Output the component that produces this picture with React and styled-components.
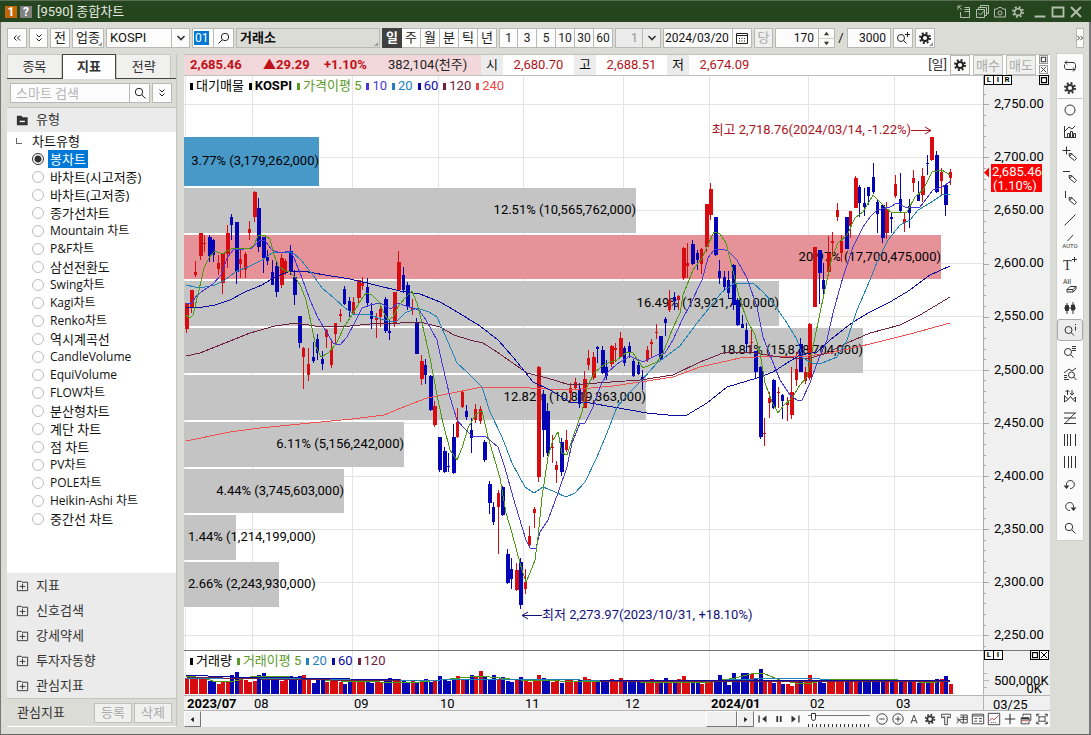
import React, { useState } from 'react'
import styled, { createGlobalStyle, css } from 'styled-components'

const UI_FONT = `Roboto, "Noto Sans CJK KR", sans-serif`
const LIST_FONT = `"Open Sans", "Noto Sans CJK KR", sans-serif`

const chartTypes = [
    '봉차트', '바차트(시고저종)', '바차트(고저종)', '종가선차트', 'Mountain 차트', 'P&F차트', '삼선전환도',
    'Swing차트', 'Kagi차트', 'Renko차트', '역시계곡선', 'CandleVolume', 'EquiVolume', 'FLOW차트',
    '분산형차트', '계단 차트', '점 차트', 'PV차트', 'POLE차트', 'Heikin-Ashi 차트', '중간선 차트'
]

const folders = ['지표', '신호검색', '강세약세', '투자자동향', '관심지표']

// u = up day, d = down day, then high, body top, body bottom, low on the price scale
const candles = `u303,303,329,333 u290,290,308,313 u261,272,275,277 u233,233,256,260 u235,243,244,252 d235,237,256,262
d239,240,255,262 u255,263,269,275 u253,253,283,294 u225,233,254,268 d214,217,225,240 d222,222,272,284
u248,259,264,278 u252,254,270,278 u221,229,233,240 u191,192,217,222 d198,208,247,252 d237,237,258,273
d250,257,261,265 d260,272,285,285 d262,266,292,297 u254,258,285,288 u259,261,273,275 d245,251,272,275
d270,277,295,305 d316,316,343,348 u347,348,357,389 u348,364,375,381 d342,357,361,363 d334,339,353,360
d351,359,364,370 u329,330,337,348 u341,349,365,368 u323,323,334,343 u309,314,316,322 d286,289,304,305
d297,301,311,317 u297,302,314,315 u280,280,298,305 u277,283,286,290 d278,287,303,307 d303,311,319,329
u313,318,320,338 u303,309,317,327 d297,299,331,333 d320,331,333,340 u292,292,323,327 u251,262,290,291
d267,275,290,293 d282,285,306,310 u299,308,310,315 d318,322,354,354 u355,361,379,385 d359,365,375,384
d375,376,410,411 u401,406,425,427 d437,437,470,472 d447,451,472,473 d453,466,467,472 d424,437,473,474
u408,422,437,438 u391,392,407,408 d405,411,417,420 d418,430,438,453 u404,409,420,423 u406,409,421,424
d440,442,460,462 d481,484,503,514 d502,507,522,525 u490,493,507,554 d486,487,515,516 d549,554,583,584
d558,569,579,589 u563,570,590,591 d558,562,605,609 u569,582,589,594 u526,536,545,547 u507,509,513,528
u366,367,477,482 d390,394,430,457 d403,411,453,456 u435,447,448,463 u461,465,470,483 d438,442,472,476
u430,440,450,452 u383,388,393,402 u378,382,388,390 d383,389,404,408 u371,379,408,408 u350,358,365,370
u352,357,378,380 d346,347,349,363 d346,350,373,374 d360,367,376,380 u345,346,364,367 u343,348,350,362
u332,338,357,358 d346,348,363,366 d342,346,353,358 d359,361,376,377 d362,365,374,375 d370,377,379,390
u346,350,360,362 u339,342,344,357 u324,332,333,339 d336,336,359,360 d317,319,323,336 u290,300,310,312
d292,297,301,310 u295,296,300,310 u247,248,278,280 u243,263,266,278 d240,244,264,265 d250,253,260,270
u248,249,264,274 u204,204,247,252 u183,189,215,220 d217,217,255,256 d260,271,278,284 d271,277,287,290
d271,280,293,299 d264,265,305,310 d298,300,325,326 d315,324,328,328 d323,330,344,352 u330,342,343,352
d351,351,372,379 d366,367,437,439 u418,433,434,446 u392,398,403,418 d379,380,408,409 u387,392,393,408
d394,395,401,419 u397,402,405,421 u367,392,415,419 u352,369,380,386 d338,344,372,372 u367,372,381,384
u323,324,378,380 u247,247,307,307 d250,250,273,304 d263,280,289,298 u236,253,272,276 u232,241,243,257
u203,210,217,221 u235,241,253,262 d217,217,249,249 u211,211,226,238 u176,178,208,208 d185,187,203,217
d188,203,207,216 d187,187,196,205 d163,177,192,194 d200,202,214,233 d204,205,238,243 u202,209,233,239
d213,217,219,233 u175,184,196,198 d173,199,211,212 u213,219,223,232 d199,206,213,228 u170,178,183,192
d181,194,201,201 u168,176,195,202 d155,163,164,175 u137,137,160,161 d151,155,192,193 u168,172,181,196
d185,185,205,216 u169,172,178,185`.split(/\s+/).map(row => ({
    up: row[0] === 'u',
    values: row.slice(1).split(',').map(Number)
}))

const volumes = [
    16, 19, 15, 15, 15, 13, 12, 10, 12, 13, 19, 22, 15, 14, 12, 13, 19, 21, 17, 15, 18, 13, 17, 18, 16, 18, 19, 15, 11, 14,
    15, 12, 15, 13, 12, 10, 13, 12, 14, 15, 12, 11, 14, 12, 13, 16, 13, 15, 14, 11, 13, 12, 13, 15, 12, 14, 18, 14, 13, 16,
    18, 14, 15, 19, 17, 23, 17, 14, 19, 15, 17, 13, 12, 15, 17, 14, 12, 15, 19, 16, 13, 12, 13, 11, 14, 15, 13, 14, 17, 15,
    13, 12, 14, 13, 15, 12, 16, 13, 12, 14, 13, 11, 12, 15, 13, 14, 16, 12, 13, 15, 18, 14, 13, 13, 10, 13, 12, 13, 19, 14,
    9, 21, 14, 21, 21, 20, 16, 25, 14, 14, 11, 13, 10, 10, 8, 12, 13, 12, 19, 14, 13, 11, 12, 12, 13, 12, 12, 13, 15, 14,
    14, 13, 15, 14, 13, 13, 12, 12, 13, 12, 13, 12, 11, 11, 12, 13, 15, 15, 18, 10
]

const averages = [
    { color: '#f05050', points: '186,441 230,432 260,428 300,424 352,419 384,415 401,408 427,398 457,392 482,387 513,387 547,389 580,389 613,386 640,382 673,377 700,367 740,358 773,356 807,356 830,353 870,344 910,334 950,323' },
    { color: '#6e2040', points: '186,356 200,353 225,343 250,333 275,326 296,323 315,326 340,327 370,324 400,323 420,322 440,327 454,335 470,340 483,343 497,352 527,373 547,378 570,385 597,383 640,380 673,375 700,362 723,353 747,352 780,357 807,359 827,353 847,343 870,333 900,325 920,315 950,297' },
    { color: '#0a0aa0', points: '186,307 197,308 215,305 230,300 245,292 262,285 275,277 290,271 303,271 325,275 350,279 375,285 400,291 420,294 440,302 454,310 480,326 498,340 513,357 533,382 550,390 570,402 590,403 613,407 647,413 678,416 687,415 707,403 727,387 757,378 773,372 787,363 800,355 817,352 830,340 853,322 870,312 890,302 910,290 930,275 950,266' },
    { color: '#2080b8', points: '186,285 195,287 205,287 215,285 225,280 235,272 250,266 262,260 272,253 285,252 292,252 301,260 313,275 322,288 334,298 345,308 355,315 368,314 378,318 388,321 397,321 405,313 417,308 429,312 437,317 445,335 457,363 467,372 482,387 490,412 502,437 512,463 525,487 534,493 543,487 555,492 566,497 575,493 585,482 597,457 607,433 617,407 630,392 643,379 657,363 680,346 697,323 710,307 722,292 735,283 753,283 763,292 773,303 787,323 797,340 803,358 812,363 822,363 837,357 847,340 857,310 870,280 877,262 888,240 900,225 910,220 918,210 930,203 942,195 950,194' },
    { color: '#4838d8', points: '186,303 191,304 197,295 204,290 213,284 221,275 227,258 234,249 244,249 252,248 260,240 265,241 272,250 281,253 290,251 294,258 302,278 310,300 318,318 326,331 333,343 340,345 347,337 355,322 362,308 370,305 380,303 391,309 398,303 406,306 413,308 419,310 426,320 437,340 443,367 450,397 457,420 463,427 472,436 485,436 498,447 505,468 513,497 522,527 526,540 530,548 536,548 540,532 548,520 558,493 567,467 572,443 580,423 585,423 593,407 600,387 608,372 617,364 630,356 643,362 657,355 665,353 673,340 682,320 690,305 702,280 708,258 714,250 722,249 728,251 737,260 747,278 757,307 763,337 772,360 780,380 790,395 797,400 802,400 810,383 817,363 827,340 833,313 843,277 853,247 863,227 870,217 877,210 890,207 897,203 907,208 920,207 933,190 942,187 951,181' },
    { color: '#4c9a14', points: '186,315 190,318 193,315 199,290 204,268 209,258 215,251 222,254 231,249 239,248 249,249 254,245 258,236 264,235 270,239 274,255 279,267 286,271 290,272 296,278 301,287 306,300 311,323 316,347 321,357 328,353 336,344 339,338 344,327 352,315 361,300 366,293 372,295 379,302 384,313 388,320 393,317 399,305 406,297 412,291 417,303 422,323 430,358 438,400 443,423 450,450 457,460 462,448 468,428 476,414 482,411 488,437 500,478 506,513 512,533 517,552 522,570 526,582 530,573 535,560 538,537 542,497 548,457 553,440 558,432 562,453 567,455 573,437 582,412 587,387 595,372 605,364 617,360 627,352 633,353 643,368 657,362 663,353 672,330 680,313 683,295 693,270 702,258 707,247 714,232 720,234 726,243 732,267 740,300 747,320 755,335 760,353 765,383 772,402 778,413 783,406 792,398 800,385 807,377 813,347 820,313 827,280 832,257 838,243 847,235 855,218 863,212 873,195 880,202 886,208 892,213 900,212 907,212 915,197 923,190 932,172 942,170 950,175' }
]

const volumeAverages = [
    { color: '#4c9a14', points: '186,676 205,678 215,682 235,681 250,677 270,676 290,677 310,679 340,681 380,682 420,682 450,679 480,676 500,678 520,680 560,681 600,681 640,682 680,682 710,682 735,678 755,673 765,674 780,680 795,683 812,683 830,679 860,680 890,679 905,681 930,683 950,680' },
    { color: '#2080b8', points: '186,678 230,678 300,678 360,680 440,680 500,679 580,680 700,681 780,678 810,678 830,680 880,680 950,681' },
    { color: '#6e2040', points: '186,677 260,679 400,681 600,681 800,681 950,681' },
    { color: '#0a0aa0', points: '186,675 230,677 300,678 400,680 600,680 800,680 950,680' }
]

const bands = [
    { right: 319, top: 137, height: 49, color: '#4898c8', label: '3.77% (3,179,262,000)' },
    { right: 636, top: 188, height: 45, label: '12.51% (10,565,762,000)' },
    { right: 941, top: 235, height: 44, color: '#e69299', label: '20.97% (17,700,475,000)' },
    { right: 779, top: 281, height: 45, label: '16.49% (13,921,740,000)' },
    { right: 863, top: 328, height: 45, label: '18.81% (15,878,704,000)' },
    { right: 646, top: 375, height: 45, label: '12.82% (10,819,363,000)' },
    { right: 404, top: 422, height: 45, label: '6.11% (5,156,242,000)' },
    { right: 344, top: 469, height: 44, label: '4.44% (3,745,603,000)' },
    { right: 236, top: 515, height: 45, label: '1.44% (1,214,199,000)' },
    { right: 279, top: 562, height: 45, label: '2.66% (2,243,930,000)' }
]

const months = [
    { x: 185, label: '2023/07', bold: true },
    { x: 252, label: '08' },
    { x: 352, label: '09' },
    { x: 438, label: '10' },
    { x: 523, label: '11' },
    { x: 623, label: '12' },
    { x: 709, label: '2024/01', bold: true },
    { x: 808, label: '02' },
    { x: 894, label: '03' }
]

const prices = ['2,750.00', '2,700.00', '2,650.00', '2,600.00', '2,550.00', '2,500.00', '2,450.00', '2,400.00', '2,350.00', '2,300.00', '2,250.00']

const barX = i => Math.round(186 + i * 4.518)
const priceY = i => Math.round(104 + i * 53.1)

const glass = <><circle cx="7" cy="7" r="3.7" /><path d="M9.8 9.8l3.7 3.7" /></>
const pencil = <path d="M7 7.500l3 .3 4.500 4.700-2 2L7.500 10.500zM7.500 10.500L10 7.800" />

const icons = {
    gear: <><circle cx="8" cy="8" r="3.1" strokeWidth="2" /><circle cx="8" cy="8" r="5" strokeWidth="2" strokeDasharray="1.963 1.963" /></>,
    search: <g>{glass}</g>,
    searchLeft: <g transform="translate(16 0) scale(-1 1)">{glass}</g>,
    zoomPlus: <><circle cx="6" cy="8" r="3.5" /><path d="M8.5 10.5l3 3M10 4.5h5M12.5 2v5" /></>,
    chevrons: <path d="M5.5 4.5L8 7l2.5-2.5M5.5 8.5L8 11l2.5-2.5" />,
    chevronsLeft: <path d="M7.500 5.500L5 8l2.500 2.500M11 5.500L8.500 8l2.500 2.500" />,
    chevronsRight: <path d="M5 5.500L7.500 8 5 10.500M8.500 5.500L11 8l-2.500 2.500" />,
    chevron: <path d="M4.5 6L8 9.5 11.5 6" strokeWidth="1.6" />,
    calendar: <><path d="M2.5 3.5h11v10h-11zM2.5 5.5h11" /><path d="M5 8.5h7M5 11h7" strokeDasharray="1 1.5" /></>,
    refresh: <path d="M5 2.5L3 4.5l2 2M3 4.5h9l1.5 2v4M11 9.5l2 2-2 2M13 11.5H4l-1.500-2v-3" />,
    circle: <circle cx="8" cy="8" r="5" />,
    indicator: <><path d="M2.500 2v11.500H14M3 7l4-4 3 2 3-3M5.500 13V9.500h2V13M8.500 13V7.500h2V13M11.500 13V9.500h2V13" /></>,
    penCross: <><path d="M.5 4.500h8M4.500 .5v8" />{pencil}</>,
    penLine: <><path d="M1 3.500h7" />{pencil}</>,
    penVertical: <><path d="M3.500 1v7" />{pencil}</>,
    line: <path d="M2.500 13.500L13.500 2.500" />,
    auto: <><path d="M5.500 7l5.500-6" /><text x="8" y="14" fontSize="6" textAnchor="middle" fill="currentColor" stroke="none">AUTO</text></>,
    text: <><text x="1" y="14" fontSize="14" fill="currentColor" stroke="none" fontFamily="Liberation Serif">T</text><path d="M10 3.500h5M12.500 1v5" /></>,
    eraseAll: <><text x="1" y="6" fontSize="7" fill="currentColor" stroke="none">All</text><path d="M5 11.500l3-3h6l-3 3zM5 11.500V14h6v-2.500M11 14l3-3V8.500" /></>,
    candles: <path d="M5 3v11M11 2v12M3.500 5.500h3v5h-3zM9.500 5h3v5h-3zM2 8h12" fill="currentColor" />,
    zoomInfo: <><circle cx="6.500" cy="8" r="3.500" /><path d="M9 10.500l3 3M13.500 4.500v4M13.500 2v1" /></>,
    zoomList: <><circle cx="6" cy="8" r="3.500" /><path d="M8.500 10.500l3 3M10 2.500h4M10 4.500h4M10 6.500h4" /></>,
    zoomChart: <><path d="M2 7l5-4 3 2 4-3M2 9.500h3M2 11.500h3M2 13.500h5" /><circle cx="9.500" cy="9" r="3" /><path d="M11.500 11l3 3" /></>,
    zigzag: <path d="M2.500 14V7.500l3.500 4 2.500-3 2.500 3 2.500-2.500v5M2.500 14l3.500-2.500M11 11.500l2.500 2.500M5.500 7V2M3.500 4l2-2 2 2M10 2v5M8 5l2 2 2-2" />,
    fibo: <path d="M2 3h12M2 8h12M2 13.500h12M13 3L3 13.500" />,
    barsWide: <path d="M2.500 2v12M5.500 2v12M8.500 2v12M13.500 2v12" />,
    bars: <path d="M2.500 2v12M6.500 2v12M9.500 2v12M13.500 2v12" />,
    undo: <><path d="M4.500 9.500a4 4 0 1 1 3.500 3" /><path d="M1.500 9.500h6l-3 3.500z" fill="currentColor" stroke="none" /></>,
    redo: <><path d="M11.500 9.500a4 4 0 1 0-3.500 3" /><path d="M8.500 9.500h6l-3 3.500z" fill="currentColor" stroke="none" /></>,
    popout: <path d="M2 2l4 4M2 5.500V2h3.500M4.500 8v5.500h9v-8h-5M8.500 3.500h5v4h-5" />,
    cascade: <path d="M2.500 5.500h8v8h-8zM4.500 5V3.500h8v8H11M6.500 3V1.500h8v8H13M4.500 9l2 2 3.500-4" />,
    camera: <><path d="M2.500 5h3l1-1.500h3l1 1.500h3v8h-11z" /><circle cx="8" cy="9" r="2" /></>,
    sun: <><circle cx="8" cy="8" r="3.300" strokeWidth="1.400" /><circle cx="8" cy="8" r="5" strokeWidth="1.800" strokeDasharray="1.963 1.963" /></>,
    minimize: <path d="M2.500 12.500h11" strokeWidth="2" />,
    maximize: <path d="M2.500 3.500h11v9h-11z" strokeWidth="1.800" />,
    close: <path d="M3 3l10 10M13 3L3 13" strokeWidth="2" />,
    prev: <><path d="M3.500 4v8" strokeWidth="1.500" /><path d="M12 4v8L7 8z" fill="currentColor" stroke="none" /></>,
    pause: <path d="M6 4.500v7M10 4.500v7" strokeWidth="2" />,
    next: <><path d="M12.500 4v8" strokeWidth="1.500" /><path d="M4 4v8l5-4z" fill="currentColor" stroke="none" /></>,
    minusCircle: <><circle cx="8" cy="8" r="6" /><path d="M5 8h6" /></>,
    plusCircle: <><circle cx="8" cy="8" r="6" /><path d="M5 8h6M8 5v6" /></>,
    letter: <path d="M4.500 13L8 3.500 11.500 13M5.500 10h5" />,
    hammer: <path d="M3 2.500h10v4h-2v-1H9.500v9h-3v-9H5v1H3z" />,
    sheet: <path d="M6 3.500h8v5M6 6h8M6 8.500h8v4H8M9.500 3.500v9M2 6l3 3-3 4M5 9l3 4M2 9h4" />,
    tableIcon: <path d="M1.500 2.500h13v11h-13zM1.500 4.500h13M4 7.500h3M4 10.500h3M9 7.500h3.500M9 10.500h3.500" />,
    graph: <><path d="M1.500 1.500h13v13h-13z" /><path d="M3 10l3-3 2 2 5-5" stroke="#b03030" /><path d="M4.500 12h1M7 12h1M9.500 12h1" /></>,
    crosshair: <path d="M8 2v12M2 8h12" strokeWidth="1.300" />,
    windows: <><path d="M4.500 5V2.500h9v7H12" /><path d="M2.500 6.500h9v7h-9z" /><path d="M3 10.500l3-1 2 1 3-2" stroke="#b03030" /><path d="M3 7.500h8" strokeWidth="2" /></>,
    fullscreen: <path d="M4.500 5.500h7v5h-7zM2 5V2.500h3M11 2.500h3V5M14 11v2.500h-3M5 13.500H2V11M2 2.500l2.500 3M14 2.500l-2.500 3M14 13.500l-2.500-3M2 13.500l2.500-3" />,
    folderPlus: <path d="M2.500 3.500h4l1 1h6v9h-11zM5 9h6M8 6v6" />,
    folderMinus: <><path d="M2 3h5l1 1.500h5.500V13H2z" fill="currentColor" stroke="none" /><path d="M5 9h5.500" stroke="#fff" strokeWidth="1.500" /></>,
    triUp: <path d="M8 5l4.500 6h-9z" fill="currentColor" stroke="none" />,
    triDown: <path d="M8 11L3.500 5h9z" fill="currentColor" stroke="none" />,
    triLeft: <path d="M4 8l7-6v12z" fill="currentColor" stroke="none" />,
    triRight: <path d="M12 8L5 2v12z" fill="currentColor" stroke="none" />,
    box: <path d="M3 3h10v10H3z" strokeWidth="2.500" />,
    cross: <path d="M2 2l12 12M14 2L2 14" strokeWidth="2" />
}

const Icon = ({ name, size = 16 }) => (
    <IconSvg viewBox="0 0 16 16" width={size} height={size} aria-hidden="true">{icons[name]}</IconSvg>
)

const toolStrip = [
    'refresh', 'gear', 'circle', 'indicator', 'penCross', 'penLine', 'penVertical', 'line', 'auto', 'text', 'eraseAll',
    'candles', 'zoomInfo', 'zoomList', 'zoomChart', 'zigzag', 'fibo', 'barsWide', 'bars', 'undo', 'redo', 'search'
]

const Toolbar = () => {
    const [period, setPeriod] = useState('일')

    return (
        <ToolbarRow>
            <Tool aria-label="이전"><Icon name="chevronsLeft" /></Tool>
            <Tool $w={19} aria-label="펼치기"><Icon name="chevrons" /></Tool>
            <Tool>전</Tool>
            <Tool $w={32} $corner>업종</Tool>
            <SelectWrap $w={84}>
                <Select aria-label="지수" defaultValue="KOSPI">
                    <option>KOSPI</option>
                    <option>KOSDAQ</option>
                </Select>
                <SelectArrow><Icon name="chevron" /></SelectArrow>
            </SelectWrap>
            <Group>
                <CodeInput aria-label="코드" defaultValue="01" />
                <Tool $joined aria-label="종목 찾기"><Icon name="searchLeft" /></Tool>
            </Group>
            <MarketName>거래소</MarketName>
            <Group>
                {['일', '주', '월', '분', '틱', '년'].map((name, i) => (
                    <Tool key={name} $w={i ? 19 : 20} $joined={i > 0} $active={period === name} onClick={() => setPeriod(name)}>{name}</Tool>
                ))}
            </Group>
            <Group>
                {[1, 3, 5, 10, 30, 60].map((n, i) => <Tool key={n} $w={19} $joined={i > 0} $small>{n}</Tool>)}
            </Group>
            <SelectWrap $w={46}>
                <Select aria-label="분 간격" defaultValue="1" $muted><option>1</option></Select>
                <SelectArrow><Icon name="chevron" /></SelectArrow>
            </SelectWrap>
            <Group>
                <Field $w={70} aria-label="날짜" defaultValue="2024/03/20" />
                <Tool $w={19} $joined aria-label="달력"><Icon name="calendar" /></Tool>
            </Group>
            <Tool $w={19} $muted>당</Tool>
            <Group>
                <Field $w={44} $right aria-label="표시 개수" defaultValue="170" />
                <Spinner>
                    <SpinButton aria-label="증가"><Icon name="triUp" size={9} /></SpinButton>
                    <SpinButton aria-label="감소"><Icon name="triDown" size={9} /></SpinButton>
                </Spinner>
            </Group>
            <Slash>/</Slash>
            <Field $w={44} $right aria-label="전체 개수" defaultValue="3000" />
            <Tool aria-label="확대"><Icon name="zoomPlus" /></Tool>
            <Tool $corner aria-label="설정"><Icon name="gear" /></Tool>
            <MoreTool aria-label="더보기"><Icon name="chevronsRight" size={14} /></MoreTool>
        </ToolbarRow>
    )
}

const Sidebar = () => {
    const [tab, setTab] = useState('지표')
    const [type, setType] = useState('봉차트')

    return (
        <SidePanel>
            <Tabs>
                {['종목', '지표', '전략'].map(name => (
                    <Tab key={name} $active={tab === name} onClick={() => setTab(name)}>{name}</Tab>
                ))}
            </Tabs>
            <SearchRow>
                <SearchInput aria-label="스마트 검색" placeholder="스마트 검색" />
                <Tool $joined aria-label="검색"><Icon name="search" /></Tool>
                <ExpandTool aria-label="펼치기"><Icon name="chevrons" /></ExpandTool>
            </SearchRow>
            <FolderHead><Icon name="folderMinus" size={15} />유형</FolderHead>
            <TypeList>
                <TreeRoot>차트유형</TreeRoot>
                {chartTypes.map(name => (
                    <TypeRow key={name}>
                        <Radio type="radio" name="chartType" checked={type === name} onChange={() => setType(name)} />
                        <TypeName $active={type === name} $latin={/[A-Z]/.test(name)}>{name}</TypeName>
                    </TypeRow>
                ))}
            </TypeList>
            {folders.map(name => (
                <Folder key={name}><Icon name="folderPlus" size={15} />{name}</Folder>
            ))}
            <SideFooter>
                <span>관심지표</span>
                <FooterButtons>
                    <FlatButton disabled>등록</FlatButton>
                    <FlatButton disabled>삭제</FlatButton>
                </FooterButtons>
            </SideFooter>
        </SidePanel>
    )
}

const PriceChart = () => (
    <Chart viewBox="184 76 866 574" role="img" aria-label="KOSPI 봉차트">
        <rect x="184" y="76" width="800" height="574" fill="#fff" />
        <rect x="984" y="76" width="66" height="574" fill="#f0f0f0" />
        <g stroke="#e4e4e4" shapeRendering="crispEdges">
            {prices.map((p, i) => <path key={p} d={`M184 ${priceY(i) + 0.5}H984`} />)}
            {months.map(m => <path key={m.label} d={`M${m.x + 0.5} 76V650`} />)}
        </g>
        {bands.map(b => (
            <g key={b.label}>
                <rect x="184" y={b.top} width={b.right - 184} height={b.height} fill={b.color || '#c4c4c4'} />
                <text
                    x={b.right < 300 ? 188 : b.right}
                    y={b.top + Math.floor(b.height / 2) + 4}
                    textAnchor={b.right < 300 ? 'start' : 'end'}
                >
                    {b.label}
                </text>
            </g>
        ))}
        <g shapeRendering="crispEdges">
            {candles.map(({ up, values: [high, top, bottom, low] }, i) => {
                const wide = bottom - top > 16
                return (
                    <g key={i} fill={up ? '#d80c10' : '#0404b4'}>
                        <rect x={barX(i)} y={high} width="1" height={low - high} />
                        <rect x={barX(i) - 1} y={top} width={wide ? 4 : 3} height={Math.max(bottom - top, 1)} />
                    </g>
                )
            })}
            {averages.map(a => <polyline key={a.color} points={a.points} fill="none" stroke={a.color} />)}
        </g>
        <g fill="#a81420" stroke="none">
            <text x="911" y="134" textAnchor="end">최고 2,718.76(2024/03/14, -1.22%)</text>
            <path d="M911 130.500h20M925 127l6 3.500-6 3.500" fill="none" stroke="#a81420" />
        </g>
        <g fill="#10107c">
            <text x="542" y="619">최저 2,273.97(2023/10/31, +18.10%)</text>
            <path d="M542 615.500h-20M528 612l-6 3.500 6 3.500" fill="none" stroke="#10107c" />
        </g>
        <g stroke="#a8a8a8" shapeRendering="crispEdges">
            <path d="M983.500 76V650" />
            {Array.from({ length: 54 }, (_, i) => (
                <path key={i} d={`M984 ${Math.round(83 + i * 10.62) + 0.5}h${i % 5 === 2 ? 5 : 2}`} />
            ))}
        </g>
        {prices.map((p, i) => <text key={p} x="994" y={priceY(i) + 4}>{p}</text>)}
        <path d="M984 172.500l5-5v10z" fill="#f00" />
        <rect x="991" y="164" width="51" height="28" fill="#f00" />
        <text x="992" y="176" fill="#fff">2,685.46</text>
        <text x="993" y="190" fill="#fff">(1.10%)</text>
    </Chart>
)

const VolumeChart = () => (
    <Chart viewBox="184 651 866 60" role="img" aria-label="거래량">
        <rect x="184" y="651" width="800" height="44" fill="#fff" />
        <rect x="184" y="695" width="866" height="16" fill="#f0f0f0" />
        <rect x="984" y="651" width="66" height="60" fill="#f0f0f0" />
        <g shapeRendering="crispEdges">
            {months.map(m => <path key={m.label} d={`M${m.x + 0.5} 651v50`} stroke="#e4e4e4" />)}
            {volumes.map((v, i) => (
                <rect key={i} x={barX(i) - 1} y={694 - v} width="4" height={v} fill={candles[i].up ? '#d80c10' : '#0404b4'} />
            ))}
            {volumeAverages.map(a => <polyline key={a.color} points={a.points} fill="none" stroke={a.color} />)}
            <path d="M184 695.500h866M184 710.500h866M983.500 651v60M984 673.500h3M984 680.500h5M984 687.500h3" stroke="#b4b4b4" />
        </g>
        {months.map(m => <text key={m.label} x={m.x + 2} y="708" fontWeight={m.bold ? 700 : 400}>{m.label}</text>)}
        <text x="994" y="685">500,000K</text>
        <text x="1042" y="693" textAnchor="end">0K</text>
        <text x="993" y="709">03/25</text>
    </Chart>
)

const Legend = ({ items }) => (
    <LegendRow>
        {items.map(([label, color, bold]) => <LegendItem key={label} $color={color} $bold={bold}>{label}</LegendItem>)}
    </LegendRow>
)

const ChartPanel = () => (
    <MainPanel>
        <QuoteBar>
            <QuoteSummary>
                <b>2,685.46</b>
                <b>▲29.29</b>
                <b>+1.10%</b>
                <QuoteVolume>382,104(천주)</QuoteVolume>
            </QuoteSummary>
            <QuoteLabel>시</QuoteLabel><QuoteValue>2,680.70</QuoteValue>
            <QuoteLabel>고</QuoteLabel><QuoteValue>2,688.51</QuoteValue>
            <QuoteLabel>저</QuoteLabel><QuoteValue>2,674.09</QuoteValue>
            <QuoteActions>
                <span>[일]</span>
                <Tool aria-label="차트 설정"><Icon name="gear" /></Tool>
                <FlatButton $w={30} disabled>매수</FlatButton>
                <FlatButton $w={30} disabled>매도</FlatButton>
                <Stack>
                    <MiniButton aria-label="최대화"><Icon name="box" size={7} /></MiniButton>
                    <MiniButton aria-label="닫기"><Icon name="cross" size={7} /></MiniButton>
                </Stack>
            </QuoteActions>
        </QuoteBar>
        <Pane>
            <PriceChart />
            <Legend items={[['대기매물', '#000'], ['KOSPI', '#000', true], ['가격이평 5', '#5c9a28'], ['10', '#4838d8'], ['20', '#2080c0'], ['60', '#0a0aa0'], ['120', '#6e2040'], ['240', '#e84848']]} />
            <Corner>
                <div><CornerButton>L</CornerButton><CornerButton>I</CornerButton><CornerButton>R</CornerButton></div>
                <div><CornerButton aria-label="최대화"><Icon name="box" size={8} /></CornerButton></div>
            </Corner>
        </Pane>
        <Pane $divided>
            <VolumeChart />
            <Legend items={[['거래량', '#000'], ['거래이평 5', '#5c9a28'], ['20', '#2080c0'], ['60', '#0a0aa0'], ['120', '#6e2040']]} />
            <Corner>
                <div><CornerButton>L</CornerButton><CornerButton>I</CornerButton></div>
                <div>
                    <CornerButton aria-label="최대화"><Icon name="box" size={8} /></CornerButton>
                    <CornerButton aria-label="닫기"><Icon name="cross" size={8} /></CornerButton>
                </div>
            </Corner>
        </Pane>
        <BottomBar>
            <ScrollTrack>
                <ScrollButton aria-label="왼쪽"><Icon name="triLeft" size={7} /></ScrollButton>
                <ScrollThumb />
                <ScrollButton aria-label="오른쪽"><Icon name="triRight" size={7} /></ScrollButton>
            </ScrollTrack>
            <BottomTools>
                {['prev', 'pause', 'next'].map(n => <BottomButton key={n} aria-label={n}><Icon name={n} size={14} /></BottomButton>)}
                <Speed type="range" min="0" max="20" defaultValue="1" aria-label="재생 속도" />
                {['minusCircle', 'plusCircle', 'letter', 'gear', 'hammer', 'sheet', 'tableIcon', 'graph', 'crosshair', 'windows', 'fullscreen'].map(n => (
                    <BottomButton key={n} aria-label={n}><Icon name={n} size={14} /></BottomButton>
                ))}
            </BottomTools>
        </BottomBar>
    </MainPanel>
)

const App = () => (
    <Window>
        <GlobalStyle />
        <TitleBar>
            <Badge $color="#c06808">1</Badge>
            <Badge $color="#808080">?</Badge>
            <Title>[9590] 종합차트</Title>
            <TitleTools>
                {['popout', 'cascade', 'camera', 'sun'].map(n => <TitleButton key={n} aria-label={n}><Icon name={n} /></TitleButton>)}
            </TitleTools>
            <TitleTools>
                {['minimize', 'maximize', 'close'].map(n => <TitleButton key={n} aria-label={n}><Icon name={n} /></TitleButton>)}
            </TitleTools>
        </TitleBar>
        <Toolbar />
        <Workspace>
            <Sidebar />
            <ChartPanel />
            <Strip>
                {toolStrip.map((name, i) => (
                    <StripButton key={i} $active={name === 'zoomInfo'} $divided={i === 1} aria-label={name}><Icon name={name} /></StripButton>
                ))}
            </Strip>
        </Workspace>
    </Window>
)

const GlobalStyle = createGlobalStyle`
    * {
        box-sizing: border-box;
    }
    body {
        margin: 0;
        background: #dcdcd7;
    }
    button, input, select {
        font: inherit;
        color: inherit;
        margin: 0;
        padding: 0;
        border-radius: 0;
    }
`

const Window = styled.div`
    display: flex;
    flex-direction: column;
    min-height: 100vh;
    background: #dcdcd7;
    border-bottom: 1px solid #666;
    box-shadow: inset 1px 0 #777, inset -2px 0 #777;
    font: 13px/16px ${UI_FONT};
    color: #111;
`

const IconSvg = styled.svg`
    display: block;
    flex: none;
    fill: none;
    stroke: currentColor;
    stroke-width: 1;
`

const TitleBar = styled.header`
    display: flex;
    align-items: center;
    gap: 3px;
    height: 22px;
    padding: 0 7px 0 5px;
    background: #24451e;
    border-top: 1px solid #5c6e58;
    color: #e4e8e0;
`

const Badge = styled.span`
    width: 12px;
    height: 12px;
    background: ${props => props.$color};
    color: #fff;
    font-size: 12px;
    line-height: 12px;
    font-weight: bold;
    text-align: center;
`

const Title = styled.span`
    flex: 1;
    padding-left: 2px;
`

const TitleTools = styled.div`
    display: flex;
    gap: 2px;
    padding-left: 3px;
    color: #b4c0ae;
`

const TitleButton = styled.button`
    display: flex;
    background: none;
    border: 0;
`

const ToolbarRow = styled.div`
    display: flex;
    align-items: center;
    gap: 2px;
    height: 32px;
    padding: 0 7px;
`

const Group = styled.div`
    display: flex;
`

const control = css`
    height: 20px;
    background: #fcfcfc;
    border: 1px solid #b8b8b4;
`

const Tool = styled.button`
    ${control}
    position: relative;
    display: flex;
    flex: none;
    align-items: center;
    justify-content: center;
    width: ${props => props.$w || 20}px;
    color: #222;
    ${props => props.$small && css`font-size: 12px;`}
    ${props => props.$joined && css`border-left: 0;`}
    ${props => props.$muted && css`color: #aaa; background: #f0f0f0;`}
    ${props => props.$active && css`color: #fff; background: #404040; border-color: #404040; font-weight: bold;`}
    ${props => props.$corner && css`
        &::after {
            content: '';
            position: absolute;
            right: 1px;
            bottom: 1px;
            border: 2px solid;
            border-color: transparent #999 #999 transparent;
        }
    `}
`

const MoreTool = styled(Tool)`
    width: 8px;
    margin-left: auto;
`

const SelectWrap = styled.div`
    position: relative;
    width: ${props => props.$w}px;
`

const Select = styled.select`
    ${control}
    appearance: none;
    display: block;
    width: 100%;
    padding: 0 22px 0 3px;
    ${props => props.$muted && css`color: #999; background: #ececec; text-align-last: right;`}
`

const SelectArrow = styled.span`
    position: absolute;
    top: 0;
    right: 0;
    display: flex;
    align-items: center;
    height: 20px;
    padding: 0 1px;
    border-left: 1px solid #b8b8b4;
    color: #333;
    pointer-events: none;
`

const Field = styled.input`
    ${control}
    width: ${props => props.$w}px;
    padding: 0 ${props => props.$right ? 4 : 1}px;
    font-size: 12px;
    text-align: ${props => props.$right ? 'right' : 'left'};
`

const CodeInput = styled.input`
    ${control}
    width: 22px;
    padding: 0 2px;
    color: #fff;
    font-size: 12px;
    background: linear-gradient(#0078d7, #0078d7) 1px center / 15px 14px no-repeat #fff;
`

const MarketName = styled.div`
    ${control}
    position: relative;
    width: 144px;
    padding: 0 3px;
    background: #dcdcd7;
    font-weight: bold;
    line-height: 18px;
    &::after {
        content: '';
        position: absolute;
        right: 1px;
        bottom: 1px;
        border: 2px solid;
        border-color: transparent #999 #999 transparent;
    }
`

const Spinner = styled.div`
    ${control}
    display: flex;
    flex-direction: column;
    width: 16px;
    border-left: 0;
`

const SpinButton = styled.button`
    display: flex;
    flex: 1;
    align-items: center;
    justify-content: center;
    background: none;
    border: 0;
    color: #333;
    & + & {
        border-top: 1px solid #d0d0cc;
    }
`

const Slash = styled.span`
    width: 8px;
    text-align: center;
`

const Workspace = styled.div`
    display: flex;
    flex: 1;
    align-items: flex-start;
    gap: 7px;
    padding: 0 8px 7px 7px;
`

const SidePanel = styled.aside`
    display: flex;
    flex: none;
    flex-direction: column;
    align-self: stretch;
    width: 170px;
    border-right: 1px solid #c4c4c0;
    border-bottom: 1px solid #fff;
    color: #333;
`

const Tabs = styled.div`
    display: flex;
    height: 25px;
    padding-right: 5px;
    border-bottom: 1px solid #444;
`

const Tab = styled.button`
    flex: 1;
    height: 24px;
    background: #f0f0ee;
    border: 1px solid #c8c8c4;
    border-bottom: 0;
    ${props => props.$active && css`
        height: 25px;
        background: #fff;
        border-color: #444;
        font-weight: bold;
    `}
`

const SearchRow = styled.div`
    display: flex;
    height: 29px;
    padding: 4px 4px 4px 3px;
    border-bottom: 1px solid #c4c4c0;
`

const SearchInput = styled.input`
    ${control}
    flex: 1;
    min-width: 0;
    padding: 0 5px;
    &::placeholder {
        color: #b4b4b4;
    }
`

const ExpandTool = styled(Tool)`
    margin-left: 2px;
`

const FolderHead = styled.div`
    display: flex;
    align-items: center;
    gap: 6px;
    height: 24px;
    padding-left: 8px;
    background: #ebebeb;
`

const TypeList = styled.div`
    flex: 1;
    background: #fff;
    color: #111;
    font-family: ${LIST_FONT};
`

const TreeRoot = styled.div`
    height: 18px;
    padding-left: 25px;
    line-height: 18px;
    &::before {
        content: '';
        float: left;
        width: 5px;
        height: 5px;
        margin: 6px 0 0 -16px;
        border: 1px solid #666;
        border-width: 0 0 1px 1px;
    }
`

const TypeRow = styled.label`
    display: flex;
    align-items: center;
    gap: 4px;
    height: 18px;
    padding-left: 25px;
`

const Radio = styled.input`
    appearance: none;
    width: 12px;
    height: 12px;
    border: 1px solid #bbb;
    border-radius: 50%;
    &:checked {
        border-color: #333;
        background: radial-gradient(#333 3px, #fff 4px);
    }
`

const TypeName = styled.span`
    padding: 0 2px;
    font-size: ${props => props.$latin ? 12 : 13}px;
    line-height: 18px;
    ${props => props.$active && css`background: #0078d7; color: #fff;`}
`

const Folder = styled.button`
    display: flex;
    align-items: center;
    gap: 6px;
    height: 25px;
    padding-left: 8px;
    background: #ebebeb;
    border: 0;
`

const SideFooter = styled.div`
    display: flex;
    align-items: center;
    justify-content: space-between;
    height: 28px;
    padding: 0 4px 0 10px;
    border-top: 1px solid #c4c4c0;
`

const FooterButtons = styled.div`
    display: flex;
    gap: 2px;
`

const FlatButton = styled.button`
    width: ${props => props.$w || 38}px;
    height: 20px;
    background: #f0f0ee;
    border: 1px solid #c0c0bc;
    color: #aaa;
`

const MainPanel = styled.main`
    flex: 1;
    min-width: 0;
`

const QuoteBar = styled.div`
    display: flex;
    height: 22px;
    background: #fff;
    border: 1px solid #c0c0c0;
    border-width: 1px 0;
    line-height: 20px;
`

const QuoteSummary = styled.div`
    display: grid;
    grid-template-columns: 73px 61px 64px auto;
    width: 297px;
    padding-left: 6px;
    background: #f2d8da;
    color: #c01018;
`

const QuoteVolume = styled.span`
    color: #222;
`

const QuoteLabel = styled.span`
    width: 22px;
    background: #ececec;
    text-align: center;
`

const QuoteValue = styled.span`
    width: 71px;
    color: #b01420;
    text-align: center;
`

const QuoteActions = styled.div`
    display: flex;
    gap: 3px;
    margin-left: auto;
    padding-right: 2px;
    color: #333;
`

const Stack = styled.div`
    display: flex;
    flex-direction: column;
    gap: 1px;
`

const MiniButton = styled.button`
    display: flex;
    align-items: center;
    justify-content: center;
    width: 9px;
    height: 9px;
    background: #fff;
    border: 1px solid #999;
`

const Pane = styled.section`
    position: relative;
    ${props => props.$divided && css`border-top: 1px solid #777;`}
`

const Chart = styled.svg`
    display: block;
    width: 100%;
    height: auto;
    font: 13px ${UI_FONT};
`

const LegendRow = styled.div`
    position: absolute;
    top: 2px;
    left: 6px;
    display: flex;
    gap: 5px;
`

const LegendItem = styled.span`
    color: ${props => props.$color};
    font-weight: ${props => props.$bold ? 'bold' : 'normal'};
    &::before {
        content: '';
        display: inline-block;
        width: 3px;
        height: 7px;
        margin-right: 3px;
        background: currentColor;
    }
`

const Corner = styled.div`
    position: absolute;
    top: -1px;
    right: 1px;
    display: flex;
    justify-content: space-between;
    width: 65px;
    & > div {
        display: flex;
    }
`

const CornerButton = styled.button`
    display: flex;
    align-items: center;
    justify-content: center;
    width: 10px;
    height: 10px;
    background: #fff;
    border: 1px solid #000;
    color: #000;
    font-size: 8px;
    line-height: 8px;
    font-weight: bold;
    & + & {
        margin-left: -1px;
    }
`

const BottomBar = styled.div`
    display: flex;
    height: 16px;
    background: #fafafa;
`

const ScrollTrack = styled.div`
    display: flex;
    flex: 1;
    background: #f4f4f4;
`

const ScrollButton = styled.button`
    display: flex;
    align-items: center;
    justify-content: center;
    width: 17px;
    background: #f0f0f0;
    border: 1px solid;
    border-color: #fff #777 #777 #fff;
`

const ScrollThumb = styled.div`
    width: 31px;
    margin-left: auto;
    background: #f0f0f0;
    border: 1px solid;
    border-color: #fff #777 #777 #fff;
`

const BottomTools = styled.div`
    display: flex;
    align-items: center;
    padding-left: 1px;
    color: #333;
`

const BottomButton = styled.button`
    display: flex;
    align-items: center;
    justify-content: center;
    width: 16px;
    height: 16px;
    background: none;
    border: 0;
`

const Speed = styled.input`
    appearance: none;
    width: 62px;
    height: 15px;
    margin: 0 4px 0 5px;
    background:
        linear-gradient(#777, #777) 0 3px / 100% 1px no-repeat,
        repeating-linear-gradient(90deg, #333 0 1px, transparent 1px 4px) 0 12px / 100% 3px no-repeat;
    &::-webkit-slider-thumb {
        appearance: none;
        width: 5px;
        height: 8px;
        margin-bottom: 5px;
        background: #fff;
        border: 1px solid #333;
        border-radius: 0 0 3px 3px;
    }
`

const Strip = styled.nav`
    flex: none;
    width: 26px;
    padding: 1px 0;
    background: #fbfbfb;
    box-shadow: 0 0 0 1px #d0d0cc;
`

const StripButton = styled.button`
    display: flex;
    align-items: center;
    justify-content: center;
    width: 100%;
    height: 22px;
    background: none;
    border: 1px solid transparent;
    color: #333;
    ${props => props.$divided && css`border-bottom-color: #c0c0c0;`}
    ${props => props.$active && css`
        background: #ececec;
        border-color: #aaa;
        border-radius: 3px;
    `}
`

export default App
